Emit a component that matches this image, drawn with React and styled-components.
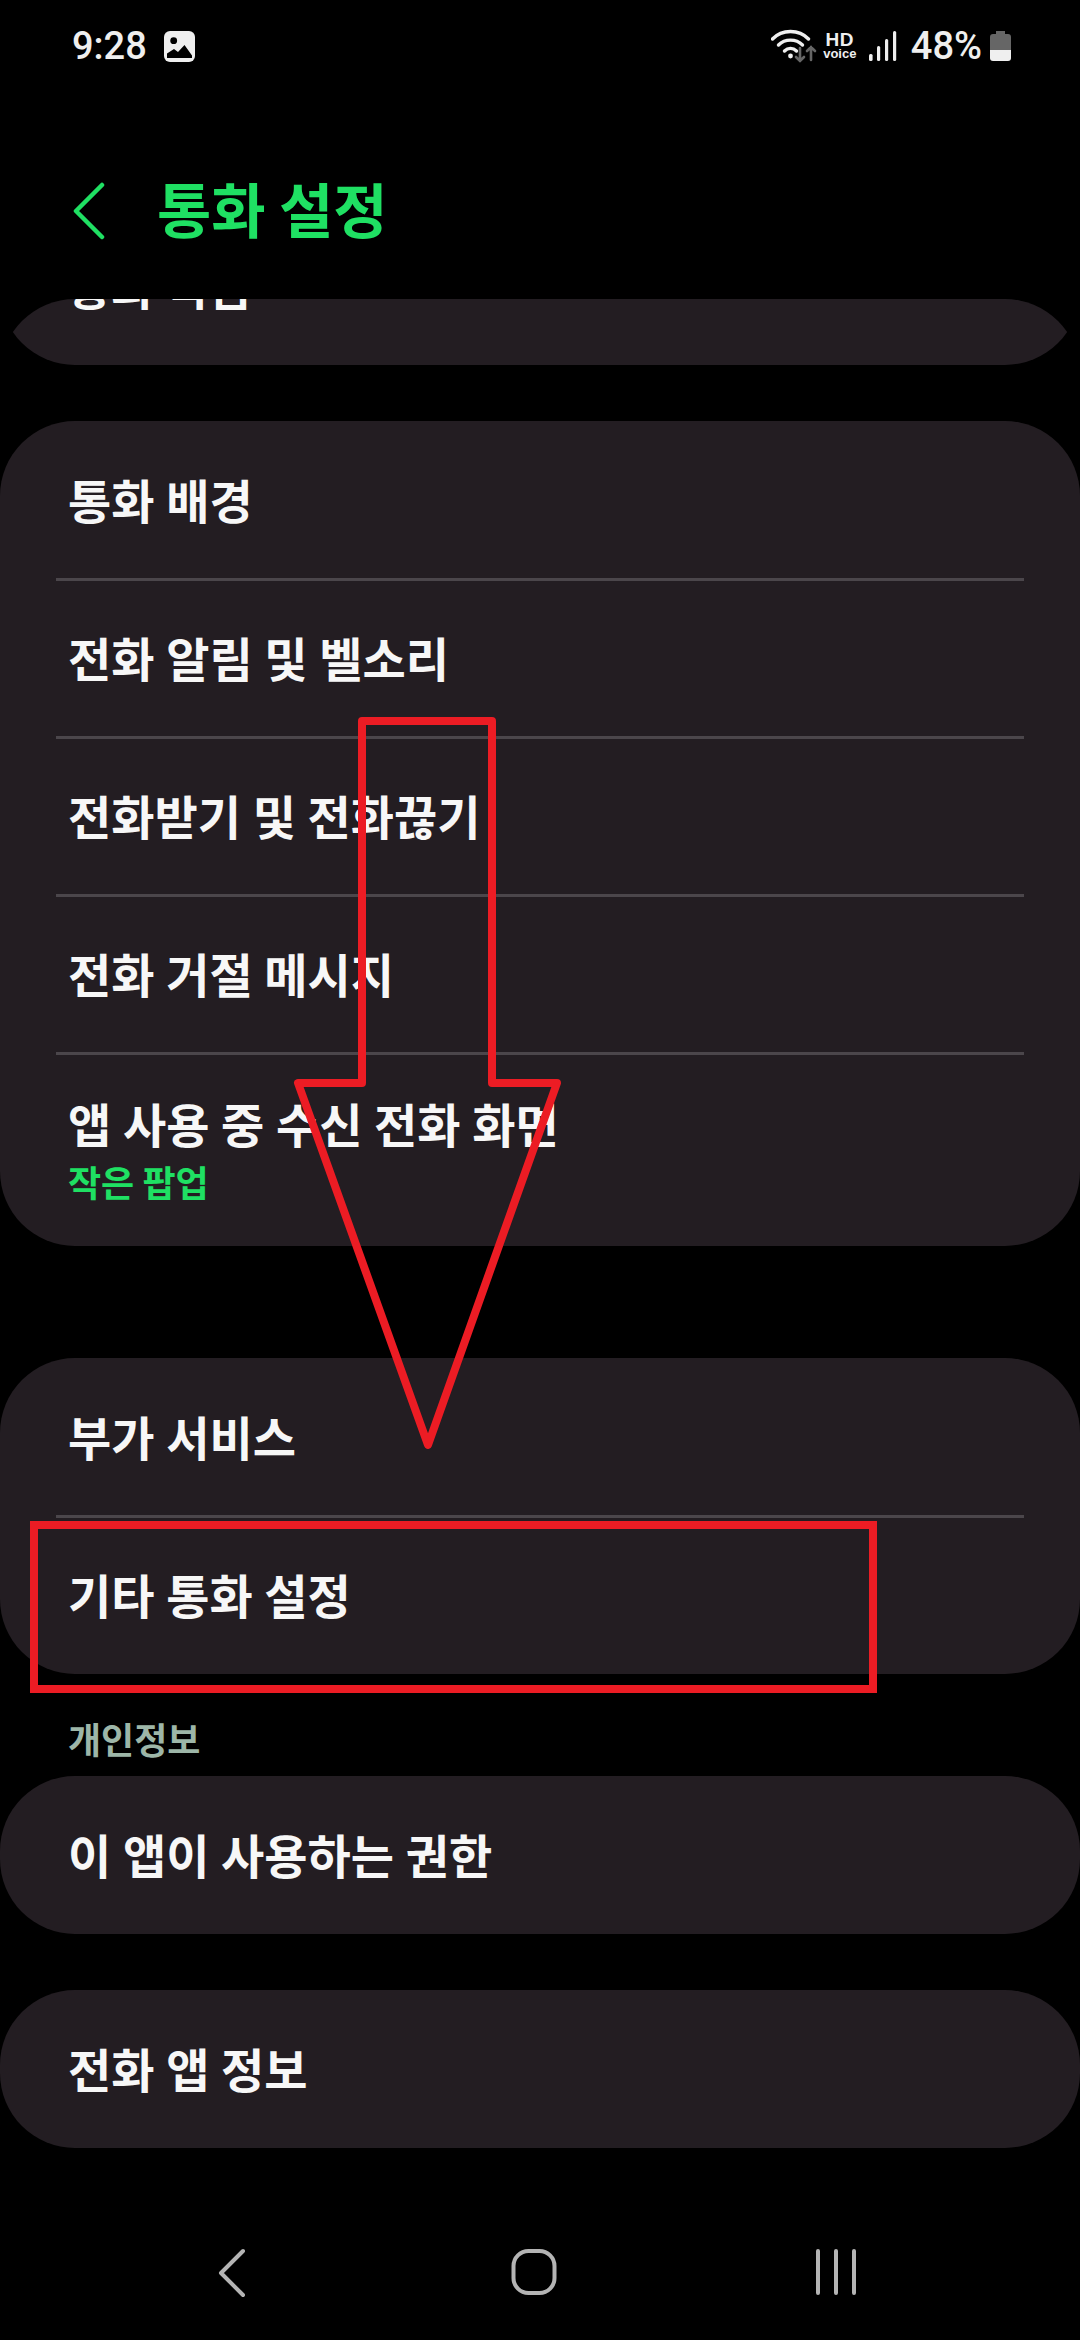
import React from 'react'
import styled, { createGlobalStyle } from 'styled-components'

const GlobalStyle = createGlobalStyle`
  html, body { margin: 0; padding: 0; background: #000; }
  * { box-sizing: border-box; }
`

const KR = `"Noto Sans CJK KR", "Noto Sans", sans-serif`

const Screen = styled.div`
  position: relative;
  width: 1080px;
  height: 2340px;
  background: #000;
  display: flex;
  flex-direction: column;
  overflow: hidden;
  font-family: ${KR};
`
const StatusBar = styled.div`
  height: 92px;
  padding: 28px 69px 0 72px;
  display: flex;
  justify-content: space-between;
  align-items: flex-start;
  color: #efefef;
  font-family: Roboto, sans-serif;
`
const StatusGroup = styled.div`
  display: flex;
  align-items: center;
  height: 36px;
`
const StatusText = styled.span`
  font-size: 38px;
  font-weight: 500;
  line-height: 36px;
`
const HdBadge = styled.div`
  width: 34px;
  margin: 0 12px 0 6px;
  display: flex;
  flex-direction: column;
  align-items: center;
  font-family: "Liberation Sans", sans-serif;
  font-weight: 700;
  line-height: 1;
`
const HdTop = styled.span`
  font-size: 19px;
  line-height: 16px;
  letter-spacing: 0.5px;
`
const HdBottom = styled.span`
  font-size: 13px;
  line-height: 12px;
`
const Percent = styled(StatusText)`
  margin-left: 14px;
`
const Header = styled.header`
  height: 207px;
  padding: 30px 0 0 70px;
  display: flex;
  align-items: center;
  gap: 48px;
`
const Title = styled.h1`
  margin: 0 0 6px;
  font-size: 59px;
  font-weight: 700;
  line-height: 1;
  color: #1fe063;
`
const ScrollArea = styled.main`
  height: 1850px;
  flex: none;
  overflow: hidden;
  border-radius: 75px 75px 0 0;
  display: flex;
  flex-direction: column;
`
const Card = styled.section`
  flex: none;
  background: #231d22;
  border-radius: 75px;
  margin-top: ${({ top }) => top || 0}px;
`
const Row = styled.div`
  height: ${({ tall }) => (tall ? 193 : 158)}px;
  padding: ${({ tall }) => (tall ? '2px 68px 2px' : '0 68px 3px')};
  display: flex;
  flex-direction: column;
  justify-content: center;
`
const RowTitle = styled.div`
  font-size: 47px;
  font-weight: 600;
  word-spacing: 1px;
  line-height: 58px;
  color: #f7f7f7;
  white-space: nowrap;
`
const RowValue = styled.div`
  font-size: 36px;
  font-weight: 600;
  line-height: 50px;
  margin-top: 4px;
  color: #1fe063;
`
const Divider = styled.div`
  height: 3px;
  margin: -1px 56px -2px;
  background: #4b464b;
`
const SectionLabel = styled.div`
  flex: none;
  height: 102px;
  padding: 42px 0 0 68px;
  font-size: 36px;
  font-weight: 700;
  line-height: 44px;
  color: #9db6a8;
`
const NavBar = styled.nav`
  flex: 1;
  padding: 93px 0 0 202px;
  display: flex;
  align-items: flex-start;
  gap: 242px;
`
const NavIcon = styled.svg`
  width: 60px;
  height: 60px;
  fill: none;
  stroke: #b4b4b4;
  stroke-width: 4;
  stroke-linecap: round;
  stroke-linejoin: round;
`
const ArrowOverlay = styled.svg`
  position: absolute;
  top: 715px;
  left: 285px;
  width: 285px;
  height: 740px;
  fill: none;
  stroke: #ec1c24;
  stroke-width: 8;
  stroke-linejoin: round;
  pointer-events: none;
`
const HighlightBox = styled.div`
  position: absolute;
  top: 1521px;
  left: 30px;
  width: 847px;
  height: 172px;
  border: 8px solid #ec1c24;
  pointer-events: none;
`
const ImageGlyph = styled.svg`
  width: 31px;
  height: 31px;
  margin-left: 17px;
`
const BatteryGlyph = styled.svg`
  width: 21px;
  height: 30px;
  margin-left: 8px;
`

const ImageIcon = () => (
  <ImageGlyph viewBox="0 0 31 31">
    <rect width="31" height="31" rx="6" fill="#efefef" />
    <circle cx="9.7" cy="9.7" r="3.4" fill="#000" />
    <path d="M3 27 V22.5 L10 18 L14 21 L20.5 14 L28 24.5 V27 Z" fill="#000" />
  </ImageGlyph>
)

const WifiIcon = () => (
  <svg width="46" height="34" viewBox="0 0 46 34" fill="none" strokeLinecap="round">
    <path d="M1.5 10 C11 0 28 0 37.5 10" stroke="#efefef" strokeWidth="3.4" />
    <path d="M7.5 16 C14 9.5 25 9.5 31.5 16" stroke="#efefef" strokeWidth="3.4" />
    <path d="M13.5 22 C17 18.5 22 18.5 25.5 22" stroke="#efefef" strokeWidth="3.4" />
    <circle cx="19.5" cy="27" r="2.4" fill="#efefef" />
    <path d="M29 19 V32 M25 28 L29 32 L33 28" stroke="#666" strokeWidth="2.6" />
    <path d="M40 31 V18 M36 22 L40 18 L44 22" stroke="#666" strokeWidth="2.6" />
  </svg>
)

const SignalIcon = () => (
  <svg width="28" height="30" viewBox="0 0 28 30" fill="#efefef">
    <rect x="0" y="23" width="3.6" height="7" rx="1.5" />
    <rect x="8" y="15" width="3.2" height="15" rx="1.5" />
    <rect x="16" y="8" width="3.2" height="22" rx="1.5" />
    <rect x="24" y="0" width="3.2" height="30" rx="1.5" />
  </svg>
)

const BatteryIcon = () => (
  <BatteryGlyph viewBox="0 0 21 30">
    <path d="M6 0 H15 V3 H18 Q21 3 21 6 V19 H0 V6 Q0 3 3 3 H6 Z" fill="#666" />
    <path d="M0 19 H21 V27 Q21 30 18 30 H3 Q0 30 0 27 Z" fill="#efefef" />
  </BatteryGlyph>
)

const SettingsRow = ({ title, value }) => (
  <Row tall={!!value}>
    <RowTitle>{title}</RowTitle>
    {value && <RowValue>{value}</RowValue>}
  </Row>
)

const App = () => {
  return (
    <Screen>
      <GlobalStyle />
      <StatusBar>
        <StatusGroup>
          <StatusText>9:28</StatusText>
          <ImageIcon />
        </StatusGroup>
        <StatusGroup>
          <WifiIcon />
          <HdBadge>
            <HdTop>HD</HdTop>
            <HdBottom>voice</HdBottom>
          </HdBadge>
          <SignalIcon />
          <Percent>48%</Percent>
          <BatteryIcon />
        </StatusGroup>
      </StatusBar>

      <Header>
        <svg width="39" height="58" viewBox="0 0 39 58" fill="none" stroke="#1fe063" strokeWidth="4.5" strokeLinecap="round" strokeLinejoin="round">
          <path d="M32 3 L6 29 L32 55" />
        </svg>
        <Title>통화 설정</Title>
      </Header>

      <ScrollArea>
        <Card top={-92}>
          <SettingsRow title="통화 녹음" />
        </Card>

        <Card top={56}>
          <SettingsRow title="통화 배경" />
          <Divider />
          <SettingsRow title="전화 알림 및 벨소리" />
          <Divider />
          <SettingsRow title="전화받기 및 전화끊기" />
          <Divider />
          <SettingsRow title="전화 거절 메시지" />
          <Divider />
          <SettingsRow title="앱 사용 중 수신 전화 화면" value="작은 팝업" />
        </Card>

        <Card top={112}>
          <SettingsRow title="부가 서비스" />
          <Divider />
          <SettingsRow title="기타 통화 설정" />
        </Card>

        <SectionLabel>개인정보</SectionLabel>
        <Card>
          <SettingsRow title="이 앱이 사용하는 권한" />
        </Card>

        <Card top={56}>
          <SettingsRow title="전화 앱 정보" />
        </Card>
      </ScrollArea>

      <NavBar>
        <NavIcon viewBox="0 0 60 60">
          <path d="M41 9 L19 31 L41 53" />
        </NavIcon>
        <NavIcon viewBox="0 0 60 60">
          <rect x="9.5" y="9" width="41" height="42" rx="15" />
        </NavIcon>
        <NavIcon viewBox="0 0 60 60">
          <path d="M12 9 V51 M30 9 V51 M48 9 V51" />
        </NavIcon>
      </NavBar>

      <ArrowOverlay viewBox="0 0 285 740">
        <path d="M77 6 H207 V368 H272 L143 730 L13 368 H77 Z" />
      </ArrowOverlay>
      <HighlightBox />
    </Screen>
  )
}

export default App
